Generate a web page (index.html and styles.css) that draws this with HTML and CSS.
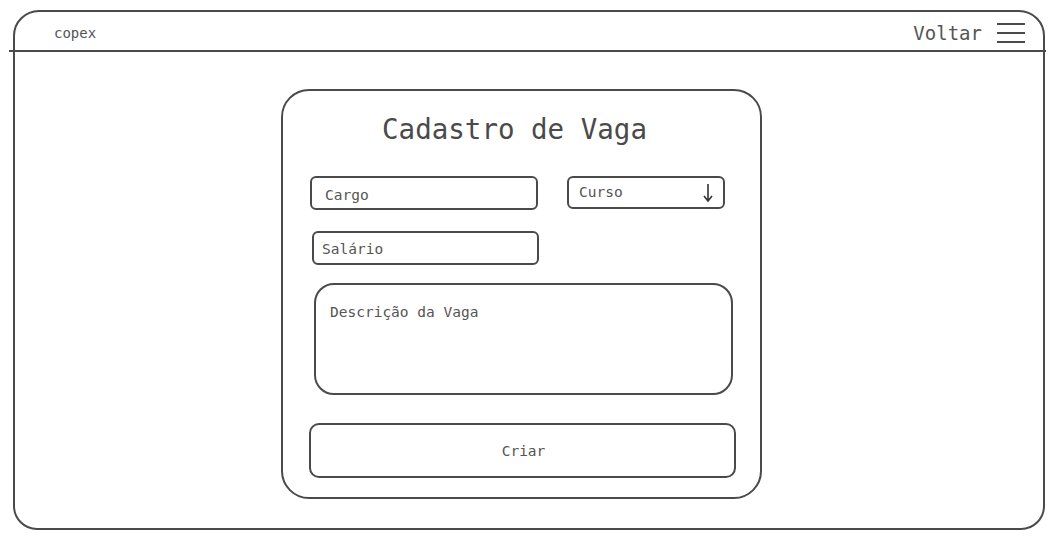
FILE: index.html
```html
<!DOCTYPE html>
<html lang="pt">
<head>
<meta charset="utf-8">
<title>Cadastro de Vaga</title>
<link rel="stylesheet" href="styles.css">
</head>
<body>
<div class="frame">
  <header class="topbar">
    <span class="brand">copex</span>
    <div class="nav">
      <span class="back">Voltar</span>
      <svg class="menu" width="30" height="22" viewBox="0 0 30 22">
        <path d="M1 2 H29 M1 11 H29 M1 20 H29" stroke="#4a4a4a" stroke-width="2" fill="none"/>
      </svg>
    </div>
  </header>
  <main class="card">
    <h1 class="title">Cadastro de Vaga</h1>
    <div class="row">
      <div class="field cargo">Cargo</div>
      <div class="field select">
        <span>Curso</span>
        <svg width="10" height="20" viewBox="0 0 10 20">
          <path d="M5 1 V18 M1 13 L5 18 L9 13" stroke="#333" stroke-width="1.6" fill="none"/>
        </svg>
      </div>
    </div>
    <div class="field salario">Salário</div>
    <div class="field desc">Descrição da Vaga</div>
    <div class="btn">Criar</div>
  </main>
</div>
</body>
</html>
```
FILE: styles.css
```css
* { box-sizing: border-box; }
body {
  margin: 0;
  background: #fff;
  font-family: "DejaVu Sans Mono", "Liberation Mono", monospace;
  color: #555;
}
.frame {
  margin: 10px 0 0 13px;
  width: 1032px;
  height: 520px;
  border: 2px solid #4a4a4a;
  border-radius: 26px 26px 24px 24px;
}
.topbar {
  height: 40px;
  margin: 0 -3px 0 -6px;
  border-bottom: 2px solid #4a4a4a;
  display: flex;
  align-items: center;
  justify-content: space-between;
  padding: 4px 20px 0 45px;
}
.brand { font-size: 14px; color: #555; }
.nav { display: flex; align-items: center; gap: 14px; }
.back { font-size: 19px; color: #555; }
.menu { display: block; }
.card {
  margin: 37px 0 0 266px;
  width: 481px;
  height: 410px;
  border: 2px solid #4a4a4a;
  border-radius: 28px;
  display: flex;
  flex-direction: column;
}
.title {
  margin: 22px 0 0 0;
  text-align: center;
  font-weight: normal;
  font-size: 27.5px;
  line-height: 32px;
  color: #4a4a4a;
  padding-right: 14px;
}
.row {
  display: flex;
  align-items: flex-start;
  margin-top: 31px;
  margin-left: 27px;
  gap: 29px;
}
.field {
  border: 2px solid #4a4a4a;
  border-radius: 6px;
  font-size: 14.5px;
  color: #555;
  display: flex;
  align-items: center;
  padding-left: 13px;
}
.cargo { width: 228px; height: 34px; padding-top: 3px; }
.select {
  width: 158px; height: 33px;
  justify-content: space-between;
  padding: 0 10px 0 10px;
}
.select span { margin-top: -2px; }
.select svg { display: block; }
.salario {
  margin: 21px 0 0 29px;
  width: 227px; height: 34px;
  padding-left: 8px;
  padding-top: 2px;
}
.desc {
  margin: 18px 0 0 31px;
  width: 419px; height: 112px;
  border-radius: 20px;
  align-items: flex-start;
  padding: 19px 0 0 14px;
}
.btn {
  margin: 28px 0 0 26px;
  width: 427px; height: 55px;
  border: 2px solid #4a4a4a;
  border-radius: 10px;
  display: flex;
  align-items: center;
  justify-content: center;
  font-size: 14.5px;
  color: #555;
  padding-left: 2px;
}
```
